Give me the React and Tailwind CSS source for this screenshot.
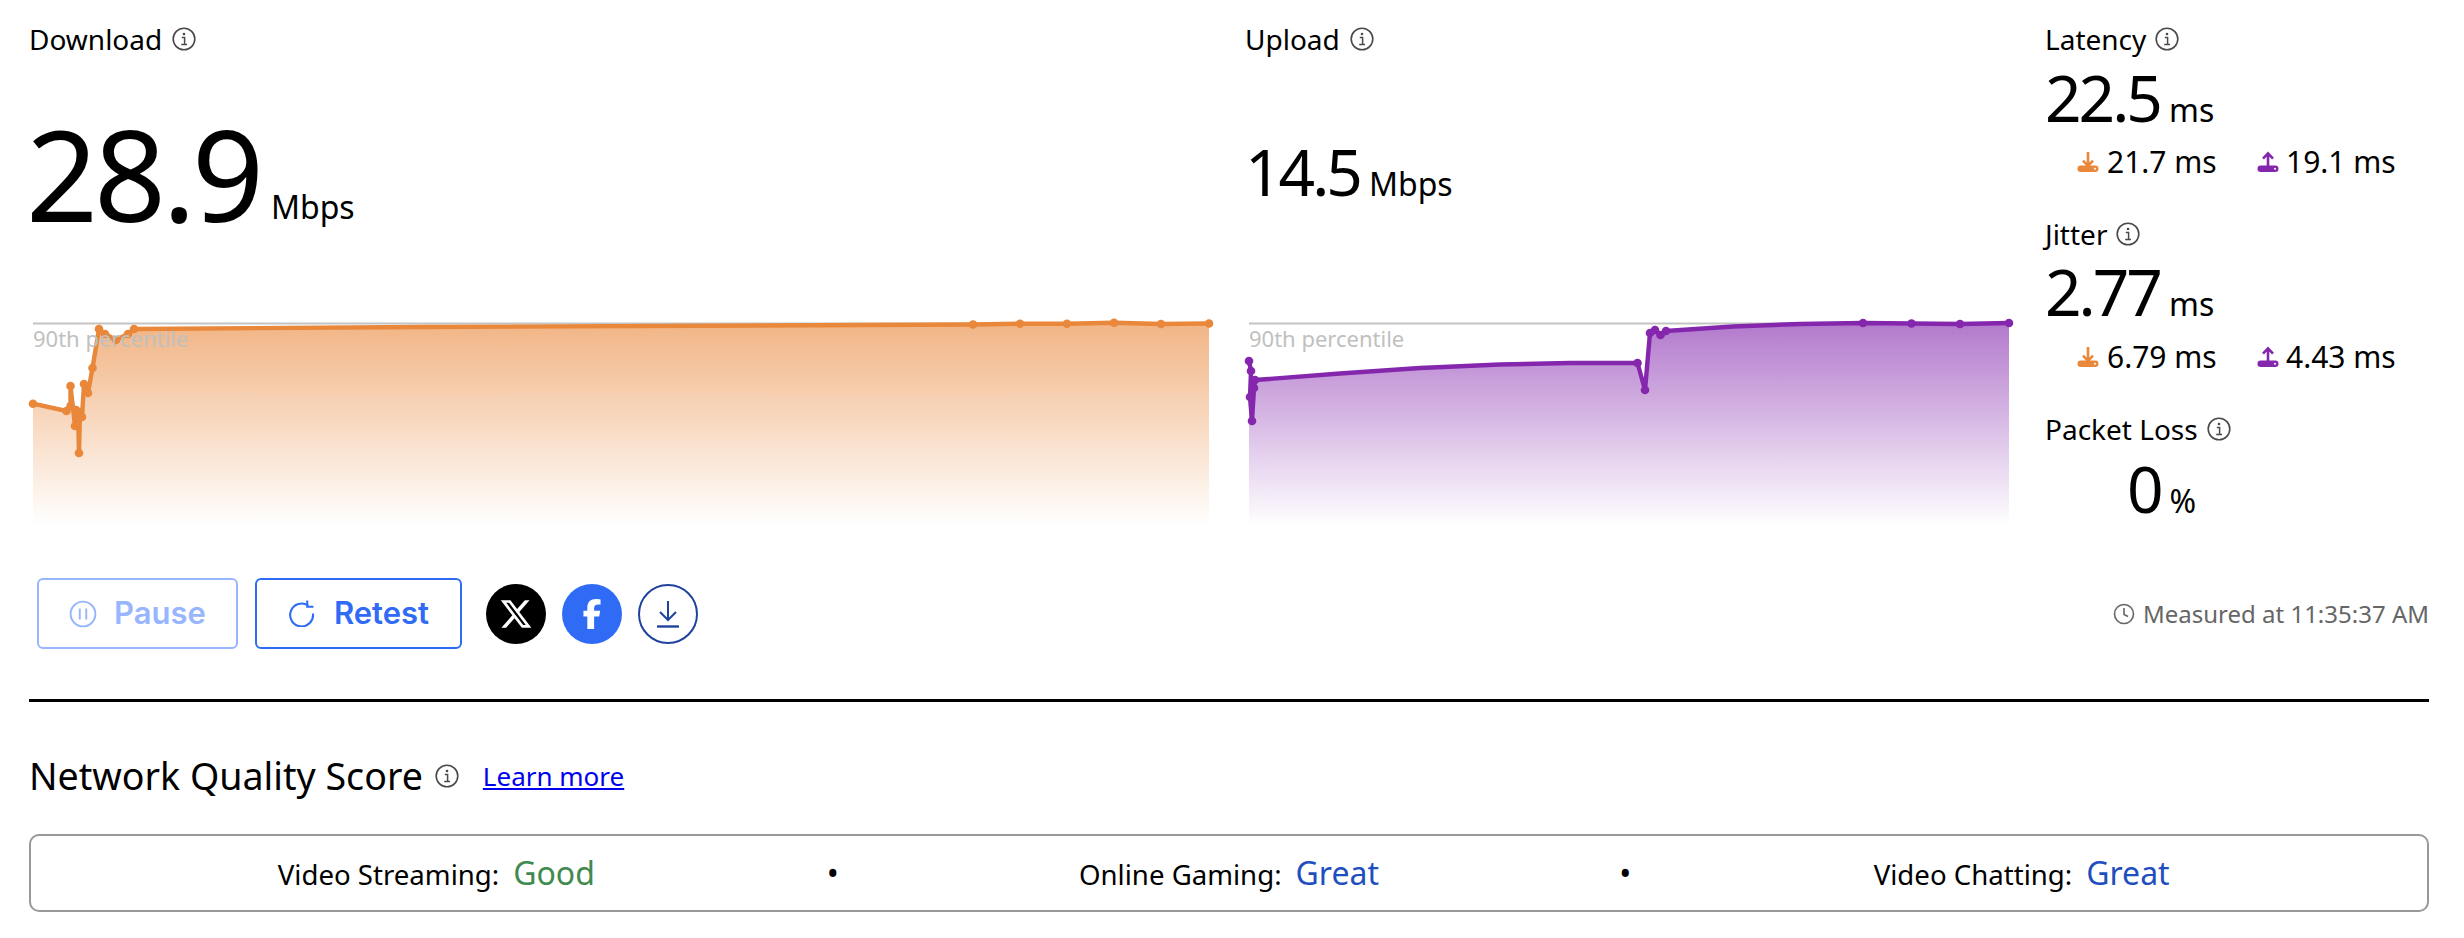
import React from "react";
import { FaXTwitter, FaFacebookF } from "react-icons/fa6";

const ORANGE = "#e9873a";
const PURPLE = "#8427ad";

const downloadPoints = [
  [33, 403.7], [66.5, 411], [70.5, 406], [70.5, 386], [75, 426], [76, 410], [80, 412], [79, 453], [78, 412], [82, 417],
  [84, 384], [88, 393], [92.5, 368], [99, 329], [105, 334], [116, 340], [128, 334], [134, 329],
  [420, 327], [973, 324.5], [1020, 323.7], [1067, 323.7], [1114, 322.8], [1161, 324], [1209, 323.5],
];
const uploadPoints = [
  [1249, 361], [1251, 371], [1250, 397], [1252, 421], [1254, 388], [1255, 380], [1340, 373.5], [1420, 368],
  [1500, 364.5], [1570, 363], [1637.5, 363], [1645, 390], [1650, 333], [1655, 330], [1660.5, 335], [1666, 331],
  [1733, 326.5], [1800, 324], [1863, 323], [1911.5, 323.5], [1960, 324], [2009, 323],
];
// only these carry no dot, they just bend the line
const noDot = [[420, 327], [1340, 373.5], [1420, 368], [1500, 364.5], [1570, 363], [1733, 326.5], [1800, 324]];

const InfoIcon = ({ size = 24 }) => (
  <svg width={size} height={size} viewBox="0 0 24 24" fill="none" className="shrink-0">
    <circle cx="12" cy="12" r="10.8" stroke="#4a4a4a" strokeWidth="1.6" />
    <circle cx="12" cy="7" r="1.3" fill="#4a4a4a" />
    <path d="M9.8 10.4h2.8v7M9.2 17.6h5.8" stroke="#4a4a4a" strokeWidth="1.5" />
  </svg>
);

const TrayIcon = ({ up, color }) => (
  <svg width="22" height="22" viewBox="0 0 22 22" className="shrink-0">
    <rect x="0.5" y="14.5" width="21" height="6.5" rx="3.2" fill={color} />
    {up ? (
      <path d="M11 15.5V3M6 7.6 11 2.4l5 5.2" stroke={color} strokeWidth="2.6" fill="none" />
    ) : (
      <path d="M11 1v13M6 9.6 11 14.8l5-5.2" stroke={color} strokeWidth="2.6" fill="none" />
    )}
    <circle cx="18" cy="17.8" r="1" fill="#fff" />
  </svg>
);

// one chart, x/y in page pixels minus the svg origin
const Chart = ({ points, left, width, color, id, label }) => {
  const top = 310;
  const height = 216;
  const pts = points.map(([x, y]) => [x - left, y - top]);
  const dots = points
    .filter((p) => !noDot.some((n) => n[0] === p[0] && n[1] === p[1]))
    .map(([x, y]) => [x - left, y - top]);
  const line = pts.map((p) => p.join(",")).join(" ");
  const area = `${pts[0][0]},${pts[0][1]} ${line} ${pts[pts.length - 1][0]},${height} ${pts[0][0]},${height}`;
  return (
    <div className="relative h-[216px]" style={{ width }}>
      <svg width={width} height={height} className="block overflow-visible">
        <defs>
          <linearGradient id={id} x1="0" y1="0" x2="0" y2="1">
            <stop offset="0%" stopColor={color} stopOpacity="0.62" />
            <stop offset="100%" stopColor={color} stopOpacity="0" />
          </linearGradient>
        </defs>
        <line x1="0" y1="13.5" x2={width} y2="13.5" stroke="#c4c4c4" strokeWidth="2" />
        <polygon points={area} fill={`url(#${id})`} />
        <polyline points={line} fill="none" stroke={color} strokeWidth="4.4" strokeLinejoin="round" />
        {dots.map(([x, y], i) => (
          <circle key={i} cx={x} cy={y} r="4.3" fill={color} />
        ))}
      </svg>
      <span className="absolute left-[0px] top-[14px] text-[22px] leading-[29px] text-[#c0c0c0]">{label}</span>
    </div>
  );
};

const Label = ({ children, gap = "gap-[10px]" }) => (
  <div className={`flex items-center ${gap} text-[28px] leading-[36px] text-black`}>
    <span>{children}</span>
    <InfoIcon />
  </div>
);

const SubRow = ({ down, up }) => (
  <div className="ml-[32px] flex items-center text-[30px] leading-[38px] text-black">
    <TrayIcon color={ORANGE} />
    <span className="ml-[8px] w-[150px]">{down}</span>
    <TrayIcon up color={PURPLE} />
    <span className="ml-[7px]">{up}</span>
  </div>
);

const Metric = ({ value, unit }) => (
  <div className="flex items-baseline text-black">
    <span className="text-[64px] font-[450] leading-[68px] tracking-[-3px]">{value}</span>
    <span className="ml-[9px] text-[32px] leading-[68px]">{unit}</span>
  </div>
);

const Score = ({ name, value, color }) => (
  <div className="flex flex-1 items-baseline justify-center gap-[14px]">
    <span className="text-[27.6px]">{name}:</span>
    <span className={`text-[32px] ${color}`}>{value}</span>
  </div>
);

const Dot = () => <span className="flex w-0 justify-center text-[32px]">•</span>;

export default function App() {
  return (
    <div className="h-[938px] w-[2464px] overflow-hidden bg-white pl-[29px] pr-[35px] pt-[21px] font-['Noto_Sans',sans-serif]">
      {/* results row */}
      <div className="flex h-[500px]">
        <div className="w-[1216px]">
          <Label>Download</Label>
          <div className="mt-[41px] flex h-[150px] items-baseline text-black">
            <span className="-ml-[3px] text-[126px] font-[450] leading-[150px] tracking-[-4px]">28.9</span>
            <span className="ml-[11px] -translate-y-[3px] text-[32px]">Mbps</span>
          </div>
          <div className="ml-[4px] mt-[62px]">
            <Chart points={downloadPoints} left={33} width={1177} color={ORANGE} id="dl" label="90th percentile" />
          </div>
        </div>
        <div className="w-[800px]">
          <Label>Upload</Label>
          <div className="mt-[78px] flex h-[74px] items-baseline text-black">
            <span className="text-[64px] font-[450] leading-[74px] tracking-[-3px]">14.5</span>
            <span className="ml-[9px] text-[32px]">Mbps</span>
          </div>
          <div className="ml-[4px] mt-[101px]">
            <Chart points={uploadPoints} left={1249} width={761} color={PURPLE} id="ul" label="90th percentile" />
          </div>
        </div>
        <div className="flex-1">
          <Label gap="gap-[9px]">Latency</Label>
          <div className="mt-[7px]">
            <Metric value="22.5" unit="ms" />
          </div>
          <div className="-mt-[1px]">
            <SubRow down="21.7 ms" up="19.1 ms" />
          </div>
          <div className="mt-[35px]">
            <Label gap="gap-[9px]">Jitter</Label>
          </div>
          <div className="mt-[6px]">
            <Metric value="2.77" unit="ms" />
          </div>
          <SubRow down="6.79 ms" up="4.43 ms" />
          <div className="mt-[35px]">
            <Label gap="gap-[9px]">Packet Loss</Label>
          </div>
          <div className="ml-[82px] mt-[8px] flex items-baseline text-black">
            <span className="text-[64px] font-[450] leading-[68px]">0</span>
            <span className="ml-[6px] text-[32px]">%</span>
          </div>
        </div>
      </div>

      {/* actions */}
      <div className="mt-[57px] flex h-[71px] items-center pl-[8px] font-['Inter',sans-serif]">
        <button className="flex h-[71px] w-[201px] items-center justify-center gap-[17px] rounded-[6px] border-2 border-[#98b6fd] text-[31px] font-semibold text-[#98b6fd]">
          <svg width="28" height="28" viewBox="0 0 26 26" fill="none" stroke="#98b6fd" strokeWidth="1.8">
            <circle cx="13" cy="13" r="11.5" />
            <path d="M10 8v10M16 8v10" />
          </svg>
          Pause
        </button>
        <button className="ml-[17px] flex h-[71px] w-[207px] items-center justify-center gap-[19px] rounded-[6px] border-2 border-[#2f6bf5] text-[31px] font-semibold text-[#2f6bf5]">
          <svg width="27" height="27" viewBox="0 0 26 26" fill="none" stroke="#2f6bf5" strokeWidth="2">
            <path d="M19.5 5.5A11 11 0 1 0 24 13" />
            <path d="M18.5 0.5v6h6" />
          </svg>
          Retest
        </button>
        <div className="ml-[24px] flex h-[60px] w-[60px] items-center justify-center rounded-full bg-black">
          <FaXTwitter className="h-[34px] w-[34px] text-white" />
        </div>
        <div className="ml-[16px] flex h-[60px] w-[60px] items-center justify-center rounded-full bg-[#2f6bf5]">
          <FaFacebookF className="h-[30px] w-[30px] text-white" />
        </div>
        <div className="ml-[16px] flex h-[60px] w-[60px] items-center justify-center rounded-full border-2 border-[#1f429e]">
          <svg width="24" height="28" viewBox="0 0 24 28" fill="none" stroke="#1f429e" strokeWidth="2">
            <path d="M12 1v18M4 12l8 8 8-8" />
            <path d="M1 26.5h22" strokeWidth="2.4" />
          </svg>
        </div>
        <div className="ml-auto flex items-center gap-[8px] font-['Noto_Sans',sans-serif] text-[24px] text-[#666]">
          <svg width="22" height="22" viewBox="0 0 22 22" fill="none" stroke="#666" strokeWidth="1.6">
            <circle cx="11" cy="11" r="9.5" />
            <path d="M11 5v6.5l4 2" />
          </svg>
          Measured at 11:35:37 AM
        </div>
      </div>

      <div className="mt-[50px] h-[3px] bg-black" />

      {/* quality score */}
      <div className="mt-[52px] flex h-[44px] items-center text-black">
        <span className="text-[37.6px] leading-[44px]">Network Quality Score</span>
        <span className="ml-[12px]"><InfoIcon /></span>
        <a href="#" className="ml-[24px] text-[26px] text-[#0000ee] underline">Learn more</a>
      </div>
      <div className="mt-[36px] flex h-[78px] items-center rounded-[10px] border-2 border-[#999] px-[9px] text-black">
        <Score name="Video Streaming" value="Good" color="text-[#3f8a4f]" />
        <Dot />
        <Score name="Online Gaming" value="Great" color="text-[#1f4fbf]" />
        <Dot />
        <Score name="Video Chatting" value="Great" color="text-[#1f4fbf]" />
      </div>
    </div>
  );
}
